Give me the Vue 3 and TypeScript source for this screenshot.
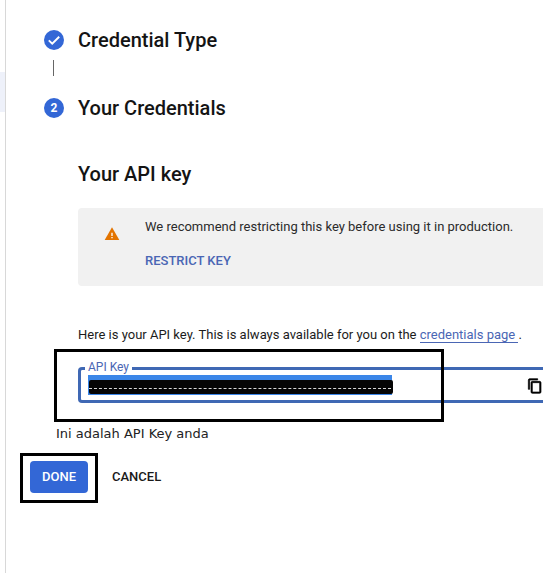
<script setup lang="ts">
const copy = 'M16 1H4c-1.1 0-2 .9-2 2v14h2V3h12V1zm3 4H8c-1.1 0-2 .9-2 2v14c0 1.1.9 2 2 2h11c1.1 0 2-.9 2-2V7c0-1.1-.9-2-2-2zm0 16H8V7h11v14z'
</script>

<template>
  <div class="page">
    <div class="rail"><div class="rail-tint"></div></div>
    <main class="main">
      <section class="step first">
        <span class="badge">
          <svg viewBox="0 0 20 20" width="16" height="16"><path d="M3.5 10.5l4.3 4.2L16.5 6" fill="none" stroke="#fff" stroke-width="2.4" /></svg>
        </span>
        <h2>Credential Type</h2>
      </section>
      <div class="connector"></div>
      <section class="step">
        <span class="badge num">2</span>
        <h2>Your Credentials</h2>
      </section>
      <div class="content">
        <h3>Your API key</h3>
        <div class="alert">
          <svg class="warn" viewBox="0 0 24 24" width="16" height="16"><path d="M1 21h22L12 2 1 21z" fill="#e37400" /><path d="M11 10h2v5h-2zM11 16.5h2v2h-2z" fill="#fff" /></svg>
          <div>
            <p class="alert-text">We recommend restricting this key before using it in production.</p>
            <a class="restrict">RESTRICT KEY</a>
          </div>
        </div>
        <p class="here">Here is your API key. This is always available for you on the <a class="link">credentials page </a> .</p>
        <div class="field">
          <span class="legend">API Key</span>
          <div class="selection"><div class="redact"></div></div>
          <svg class="copy" viewBox="0 0 24 24" width="16" height="16"><path :d="copy" fill="#000" stroke="#000" stroke-width="1" /></svg>
        </div>
      </div>
      <p class="note">Ini adalah API Key anda</p>
      <div class="actions">
        <button class="done">DONE</button>
        <button class="cancel">CANCEL</button>
      </div>
    </main>
    <div class="mark mark-key"></div>
    <div class="mark mark-done"></div>
  </div>
</template>

<style scoped>
.page {
  position: relative;
  display: flex;
  width: 543px;
  height: 573px;
  overflow: hidden;
  background: #fff;
  font-family: Roboto, "Liberation Sans", sans-serif;
  color: #1a1a1a;
}
.rail {
  flex: none;
  width: 6px;
  box-sizing: border-box;
  border-right: 1px solid #d8d8d8;
  padding-top: 72px;
}
.rail-tint {
  height: 40px;
  background: #eef1fa;
}
.main {
  flex: 1;
  min-width: 0;
  padding-left: 38px;
}
.step {
  display: flex;
  align-items: center;
  gap: 14px;
  height: 24px;
}
.step.first {
  margin-top: 28px;
}
.badge {
  flex: none;
  display: flex;
  align-items: center;
  justify-content: center;
  width: 20px;
  height: 20px;
  border-radius: 50%;
  background: #3367d6;
}
.num {
  color: #fff;
  font-size: 12px;
  font-weight: 700;
}
h2, h3 {
  margin: 0;
  font-size: 20px;
  font-weight: 500;
  line-height: 24px;
  color: #141414;
}
.connector {
  width: 1px;
  height: 16px;
  margin: 8px 0 20px 9px;
  background: #666;
}
.content {
  padding-left: 34px;
}
h3 {
  margin-top: 42px;
}
.alert {
  display: flex;
  height: 78px;
  margin-top: 22px;
  margin-right: -10px;
  border-radius: 4px;
  background: #f1f1f1;
  box-sizing: border-box;
  padding: 11px 0 0 26px;
}
.warn {
  flex: none;
  margin: 7px 25px 0 0;
}
.alert-text {
  margin: 0;
  font-size: 13px;
  line-height: 16px;
  color: #2b2b2b;
}
.restrict {
  display: block;
  margin-top: 18px;
  font-size: 13px;
  line-height: 16px;
  font-weight: 500;
  color: #4a66b4;
}
.here {
  margin: 41px 0 0;
  font-size: 13px;
  line-height: 16px;
  white-space: nowrap;
  color: #1c1c1c;
}
.link {
  color: #4a66b4;
  border-bottom: 1px solid #4a66b4;
}
.field {
  position: relative;
  display: flex;
  align-items: center;
  justify-content: space-between;
  box-sizing: border-box;
  height: 36px;
  margin-top: 24px;
  margin-right: -10px;
  padding-left: 7px;
  border: 3px solid #3f68b4;
  border-right: none;
  border-radius: 4px 0 0 4px;
}
.legend {
  position: absolute;
  top: -10px;
  left: 4px;
  padding: 0 3px 0 3px;
  background: #fff;
  font-size: 12px;
  line-height: 14px;
  color: #4a66b4;
}
.selection {
  position: relative;
  width: 304px;
  height: 20px;
  padding: 5px 0 1px 1px;
  box-sizing: border-box;
  background: #3b86e8;
}
.redact {
  width: 304px;
  height: 14px;
  border-radius: 2px;
  background: #050505;
}
.selection::after {
  content: "";
  position: absolute;
  left: 1px;
  right: 1px;
  top: 13px;
  border-top: 1px dashed #d8d8d8;
}
.copy {
  margin-top: 1px;
  margin-right: 10px;
}
.note {
  margin: 23px 0 0 12px;
  font-family: "DejaVu Sans", sans-serif;
  font-size: 13px;
  line-height: 16px;
  color: #222;
}
.actions {
  display: flex;
  align-items: center;
  gap: 24px;
  margin: 19px 0 0 -14px;
}
.done, .cancel {
  border: none;
  padding: 0 0 1px;
  font-family: inherit;
  font-size: 13px;
  font-weight: 500;
}
.done {
  width: 58px;
  height: 32px;
  border-radius: 4px;
  background: #3367d6;
  color: #fff;
}
.cancel {
  background: none;
  color: #1a1a1a;
}
.mark {
  position: absolute;
  box-sizing: border-box;
  border: 3px solid #000;
}
.mark-key {
  left: 54px;
  top: 349px;
  width: 390px;
  height: 73px;
}
.mark-done {
  left: 20px;
  top: 453px;
  width: 78px;
  height: 50px;
}
</style>
